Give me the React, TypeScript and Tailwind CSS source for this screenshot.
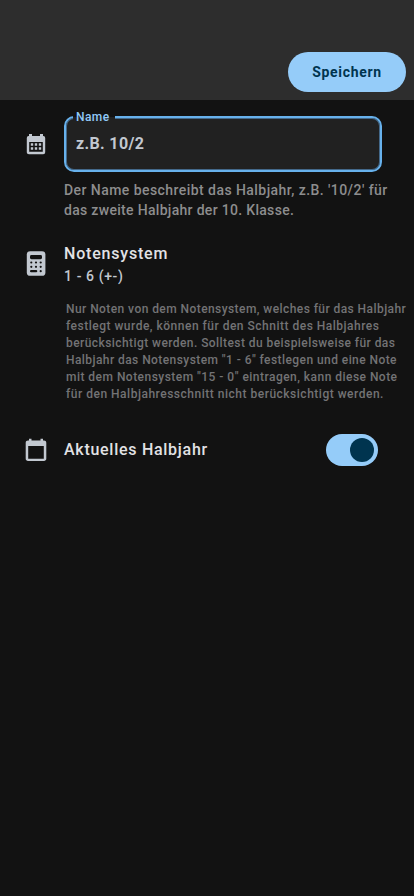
const nameHelp = [
  { text: "Der Name beschreibt das Halbjahr, z.B. '10/2' für", cls: 'tracking-[0.44px]' },
  { text: 'das zweite Halbjahr der 10. Klasse.', cls: 'tracking-[0.31px]' },
];

const gradeHelp = [
  { text: 'Nur Noten von dem Notensystem, welches für das Halbjahr', cls: 'tracking-[0.43px]' },
  { text: 'festlegt wurde, können für den Schnitt des Halbjahres', cls: 'tracking-[0.5px]' },
  { text: 'berücksichtigt werden. Solltest du beispielsweise für das', cls: 'tracking-[0.43px]' },
  { text: 'Halbjahr das Notensystem "1 - 6" festlegen und eine Note', cls: 'tracking-[0.43px]' },
  { text: 'mit dem Notensystem "15 - 0" eintragen, kann diese Note', cls: 'tracking-[0.47px]' },
  { text: 'für den Halbjahresschnitt nicht berücksichtigt werden.', cls: 'tracking-[0.51px]' },
];

function CalendarMonth() {
  return (
    <svg viewBox="0 0 24 24" className="mt-[33px] size-6 shrink-0" fill="currentColor">
      <path d="M9.2,10.3V12.7H6.8V10.3H9.2M13.2,10.3V12.7H10.8V10.3H13.2M17.2,10.3V12.7H14.8V10.3H17.2M19,3A2,2 0 0,1 21.2,5V19.3A2,2 0 0,1 19.2,21.3H5C3.7,21.3 2.8,20.4 2.8,19.3V5A2,2 0 0,1 5,3V1H8V3H16V1H19V3M18.8,18.8V9H5.2V18.8H18.8M9.2,14.3V16.7H6.8V14.3H9.2M13.2,14.3V16.7H10.8V14.3H13.2M17.2,14.3V16.7H14.8V14.3H17.2Z" />
    </svg>
  );
}

function Calculator() {
  return (
    <svg viewBox="0 0 24 26" className="h-[26px] w-6 shrink-0">
      <rect x="2.8" y="1.2" width="18.6" height="24.6" rx="3.4" fill="currentColor" />
      <g fill="#121212">
        <rect x="6" y="5" width="12" height="4.2" rx="1.4" />
        {[12.5, 16.8].map((y) => [7.3, 12, 16.7].map((x) => <circle key={`${x}-${y}`} cx={x} cy={y} r="1.1" />))}
        <rect x="6" y="20.1" width="7.3" height="2.2" rx="1.1" />
        <circle cx="16.7" cy="21.2" r="1.1" />
      </g>
    </svg>
  );
}

function CalendarToday() {
  return (
    <svg viewBox="0 0 24 24" className="size-6 shrink-0" fill="currentColor">
      <path d="M20 2.6h-1V.7h-2.5v1.9h-9V.7H5v1.9H4c-1.3 0-2.3.9-2.3 2.2v16c0 1.3 1 2.2 2.3 2.2h16c1.3 0 2.3-.9 2.3-2.2v-16c0-1.3-1-2.2-2.3-2.2zM19.8 20.8H4.2V8h15.6v12.8z" />
    </svg>
  );
}

export default function App() {
  return (
    <div className="h-[896px] w-full overflow-hidden bg-[#121212] font-['Roboto','Inter',sans-serif] font-medium text-[#c2c8d0]">
      <header className="flex h-[100px] items-end justify-end bg-[#2d2d2d] px-2 pb-2">
        <button className="h-10 w-[118px] rounded-full bg-[#95ccf9] text-[14px] font-bold tracking-[0.7px] text-[#00344f]">
          Speichern
        </button>
      </header>

      <section className="flex gap-4 pl-6">
        <CalendarMonth />
        <div className="pt-4">
          <div className="relative flex h-14 w-[318px] items-center rounded-[10px] border-2 border-[#67b1ec] bg-[#212121] pl-[10px] shadow-[inset_0_0_0_1px_#44698a]">
            <span className="absolute -top-[9px] left-[7px] h-4 w-[42px] bg-[linear-gradient(#121212_50%,#212121_50%)] pl-[3px] text-[12px] leading-4 tracking-[0.4px] text-[#91c9f8]">
              Name
            </span>
            <span className="text-[16px] font-bold leading-6 tracking-[0.35px]">z.B. 10/2</span>
          </div>
          <p className="mt-2 whitespace-nowrap text-[14px] leading-5 text-[#8d8d8e]">
            {nameHelp.map((l) => (
              <span key={l.text} className={`block ${l.cls}`}>{l.text}</span>
            ))}
          </p>
        </div>
      </section>

      <section className="mt-[22px] flex gap-4 pl-6">
        <div className="pt-2">
          <Calculator />
        </div>
        <div>
          <h2 className="text-[16px] leading-6 tracking-[0.8px] text-[#e2e2e5]">Notensystem</h2>
          <p className="text-[14px] leading-5 tracking-[0.6px]">1 - 6 (+-)</p>
        </div>
      </section>

      <p className="mt-[15px] whitespace-nowrap pl-[66px] text-[12px] leading-[17px] text-[#737375]">
        {gradeHelp.map((l) => (
          <span key={l.text} className={`block ${l.cls}`}>{l.text}</span>
        ))}
      </p>

      <section className="mt-[31px] flex h-8 items-center gap-4 pl-6 pr-9">
        <CalendarToday />
        <h2 className="grow text-[16px] leading-6 tracking-[0.72px] text-[#e2e2e5]">Aktuelles Halbjahr</h2>
        <div className="flex h-8 w-[52px] items-center justify-end rounded-full bg-[#95ccf9] pr-1">
          <div className="size-6 rounded-full bg-[#00344f]" />
        </div>
      </section>
    </div>
  );
}
